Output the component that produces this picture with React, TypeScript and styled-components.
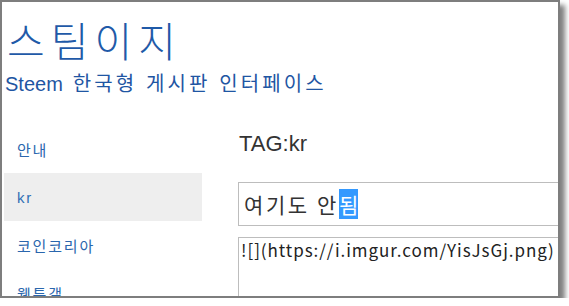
import React from "react";
import styled, { createGlobalStyle } from "styled-components";

const Global = createGlobalStyle`
  html, body { margin: 0; padding: 0; background: #ffffff; }
  body { font-family: "Liberation Sans", "Noto Sans CJK KR", sans-serif; }
`;

const Frame = styled.div`
  box-sizing: border-box;
  width: 560px;
  height: 298px;
  border: 2px solid #7e7e7e;
  box-shadow: 5px 5px 5px rgba(0, 0, 0, 0.5);
  background: #fff;
  overflow: hidden;
  display: flex;
  flex-direction: column;
`;

const Header = styled.header`
  padding: 11px 0 0 3px;
`;

const Title = styled.h1`
  margin: 0;
  padding-left: 2px;
  font-family: "Noto Sans CJK KR", sans-serif;
  font-weight: 300;
  font-size: 41px;
  line-height: 52px;
  letter-spacing: 6px;
  color: #1f5aa8;
`;

const Subtitle = styled.div`
  margin-top: 7px;
  font-family: "Liberation Sans", "Noto Sans CJK KR", sans-serif;
  font-size: 20px;
  line-height: 24px;
  color: #1f56a3;
`;

const Korean = styled.span`
  margin-left: 10px;
  letter-spacing: 3.1px;
`;

const Body = styled.div`
  display: flex;
  margin-top: 29px;
  padding-left: 2px;
`;

const Sidebar = styled.nav`
  width: 198px;
  flex-shrink: 0;
  display: flex;
  flex-direction: column;
`;

const NavItem = styled.div<{ $active?: boolean }>`
  height: 48px;
  display: flex;
  align-items: center;
  padding-left: 13px;
  font-family: "Liberation Sans", "Noto Sans CJK KR", sans-serif;
  font-size: 15px;
  letter-spacing: 1.8px;
  color: ${(p) => (p.$active ? "#2f6fb5" : "#2a66ad")};
  background: ${(p) => (p.$active ? "#eeeeee" : "transparent")};
`;

const Main = styled.main`
  flex: 1;
  min-width: 0;
  padding-left: 36px;
  display: flex;
  flex-direction: column;
`;

const Tag = styled.div`
  height: 30px;
  margin-top: 4px;
  padding-left: 1px;
  display: flex;
  align-items: center;
  font-family: "Liberation Sans", sans-serif;
  font-size: 22px;
  color: #333;
`;

const Input = styled.div`
  margin-top: 23px;
  box-sizing: border-box;
  height: 44px;
  width: 400px;
  flex-shrink: 0;
  border: 1px solid #bdbdbd;
  display: flex;
  align-items: center;
  padding-left: 5px;
  font-family: "Noto Sans CJK KR", sans-serif;
  font-size: 21px;
  letter-spacing: 2.6px;
  color: #333;
`;

const Selected = styled.span`
  background: #3399ff;
  color: #fff;
  letter-spacing: 0;
`;

const TextArea = styled.div`
  margin-top: 11px;
  box-sizing: border-box;
  height: 80px;
  width: 400px;
  flex-shrink: 0;
  border: 1px solid #bdbdbd;
  padding: 0 0 0 2px;
  font-family: "Noto Sans CJK KR", sans-serif;
  font-size: 17px;
  line-height: 24px;
  letter-spacing: 0.95px;
  color: #222;
  white-space: nowrap;
`;

export default function App() {
  return (
    <>
      <Global />
      <Frame>
        <Header>
          <Title>스팀이지</Title>
          <Subtitle>
            Steem<Korean>한국형 게시판 인터페이스</Korean>
          </Subtitle>
        </Header>
        <Body>
          <Sidebar>
            <NavItem>안내</NavItem>
            <NavItem $active>kr</NavItem>
            <NavItem>코인코리아</NavItem>
            <NavItem>웹툰갤</NavItem>
          </Sidebar>
          <Main>
            <Tag>TAG:kr</Tag>
            <Input>
              여기도 안<Selected>됨</Selected>
            </Input>
            <TextArea>![](https://i.imgur.com/YisJsGj.png)</TextArea>
          </Main>
        </Body>
      </Frame>
    </>
  );
}
